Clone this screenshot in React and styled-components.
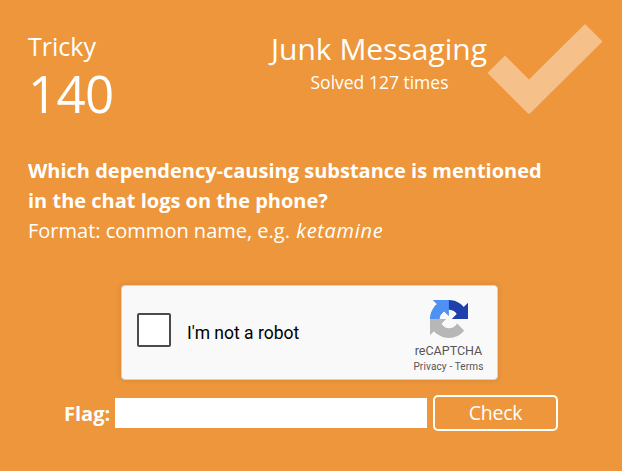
import React from "react";
import styled, { createGlobalStyle } from "styled-components";

const GlobalStyle = createGlobalStyle`
  *, *::before, *::after { box-sizing: border-box; }
  body { margin: 0; background: #ed963b; }
`;

const Challenge = styled.main`
  position: relative;
  width: 622px;
  height: 471px;
  padding: 29px 28px 0;
  overflow: hidden;
  background: #ed963b;
  color: #fff;
  font-family: "Open Sans", sans-serif;
  font-size: 20px;
  line-height: 30px;
`;

const Header = styled.header`
  display: grid;
  grid-template-columns: 200px 302px 1fr;
  height: 127px;
`;

const Score = styled.div`
  display: flex;
  flex-direction: column;
`;

const Difficulty = styled.span`
  font-size: 25px;
  line-height: 35px;
`;

const Points = styled.span`
  font-size: 51px;
  letter-spacing: -0.6px;
  line-height: 58px;
`;

const Heading = styled.div`
  text-align: center;
`;

const Title = styled.h1`
  margin: 0;
  font-size: 30px;
  font-weight: 400;
  line-height: 40px;
`;

const Solved = styled.p`
  margin: 0;
  padding-left: 1px;
  font-size: 17.5px;
  line-height: 27px;
`;

const SolvedMark = styled.svg`
  position: absolute;
  left: 487px;
  top: 24px;
  width: 116px;
  height: 91px;
  fill: #f6c08b;
`;

const Question = styled.p`
  margin: 0;
  white-space: nowrap;
`;

const Example = styled.em`
  margin-left: 1px;
  letter-spacing: 0.7px;
`;

const Captcha = styled.section`
  display: flex;
  width: 377px;
  height: 95px;
  margin: 39px 0 0 93px;
  border: 1px solid #d3d3d3;
  border-radius: 4px;
  background: #f9f9f9;
  box-shadow: 0 0 5px 1px rgba(0, 0, 0, 0.08);
  font-family: Roboto, sans-serif;
`;

const CaptchaLabel = styled.label`
  display: flex;
  flex: 1;
  align-items: center;
  gap: 16px;
  padding-left: 15px;
  color: #000;
  font-size: 17.5px;
`;

const Checkbox = styled.input`
  appearance: none;
  width: 34px;
  height: 34px;
  margin: 0 0 6px;
  border: 2px solid #4b4b4b;
  border-radius: 2px;
  background: #fff;
`;

const Brand = styled.div`
  display: flex;
  flex-direction: column;
  align-items: center;
  width: 97px;
  padding-top: 14px;
  color: #555;
`;

const Logo = styled.svg`
  width: 38px;
  height: 38px;
`;

const BrandName = styled.span`
  margin-top: 5px;
  font-size: 12.5px;
  line-height: 16px;
`;

const Links = styled.span`
  font-size: 10px;
  letter-spacing: 0.15px;
  line-height: 16px;
`;

const AnswerForm = styled.form`
  display: flex;
  align-items: center;
  height: 36px;
  margin: 15px 0 0 36px;
`;

const FlagLabel = styled.label`
  width: 51px;
  padding-top: 1px;
  font-weight: 700;
`;

const FlagInput = styled.input`
  width: 312px;
  height: 30px;
  padding: 0 6px;
  border: 0;
  border-radius: 0;
  background: #fff;
  font: inherit;
`;

const CheckButton = styled.button`
  width: 125px;
  height: 36px;
  margin-left: 6px;
  padding: 0;
  border: 2px solid #fff;
  border-radius: 5px;
  background: transparent;
  color: #fff;
  font: inherit;
  font-size: 19.5px;
  letter-spacing: -0.3px;
`;

function CaptchaLogo() {
  return (
    <Logo viewBox="0 0 64 64" aria-hidden="true">
      <path fill="#1f40aa" d="M64 31.955l-.033-1.37V4.687l-7.16 7.16C50.948 4.674 42.033.093 32.05.093c-10.389 0-19.622 4.96-25.458 12.64l11.736 11.86a15.55 15.55 0 0 1 4.754-5.334c2.05-1.6 4.952-2.906 8.968-2.906.485 0 .86.057 1.135.163 4.976.393 9.288 3.14 11.828 7.124l-8.307 8.307L64 31.953" />
      <path fill="#4f91f2" d="M31.862.094l-1.37.033H4.594l7.16 7.16C4.58 13.147 0 22.06 0 32.046c0 10.388 4.96 19.622 12.64 25.458L24.5 45.768a15.55 15.55 0 0 1-5.334-4.754c-1.6-2.05-2.906-4.952-2.906-8.968 0-.485.057-.86.163-1.135.393-4.976 3.14-9.288 7.124-11.828l8.307 8.307L31.86.095" />
      <path fill="#b7b7b7" d="M.001 32.045l.033 1.37v25.898l7.16-7.16c5.86 7.173 14.774 11.754 24.76 11.754 10.388 0 19.622-4.96 25.458-12.64l-11.736-11.86a15.55 15.55 0 0 1-4.754 5.334c-2.05 1.6-4.952 2.906-8.968 2.906-.485 0-.86-.057-1.135-.163-4.976-.393-9.288-3.14-11.828-7.124l8.307-8.307c-10.522.04-22.4.066-27.295-.005" />
    </Logo>
  );
}

export default function App() {
  return (
    <>
      <GlobalStyle />
      <Challenge>
        <Header>
          <Score>
            <Difficulty>Tricky</Difficulty>
            <Points>140</Points>
          </Score>
          <Heading>
            <Title>Junk Messaging</Title>
            <Solved>Solved 127 times</Solved>
          </Heading>
        </Header>
        <SolvedMark viewBox="0 0 116 91" aria-hidden="true">
          <path d="M98 0L115.5 17.5L44 88.5L41.5 90L.5 49L18 31.5L42 55.5Z" />
        </SolvedMark>
        <Question>
          <strong>
            Which dependency-causing substance is mentioned
            <br />
            in the chat logs on the phone?
          </strong>
          <br />
          Format: common name, e.g. <Example>ketamine</Example>
        </Question>
        <Captcha>
          <CaptchaLabel>
            <Checkbox type="checkbox" />
            I'm not a robot
          </CaptchaLabel>
          <Brand>
            <CaptchaLogo />
            <BrandName>reCAPTCHA</BrandName>
            <Links>Privacy - Terms</Links>
          </Brand>
        </Captcha>
        <AnswerForm>
          <FlagLabel htmlFor="flag">Flag:</FlagLabel>
          <FlagInput id="flag" />
          <CheckButton type="button">Check</CheckButton>
        </AnswerForm>
      </Challenge>
    </>
  );
}
